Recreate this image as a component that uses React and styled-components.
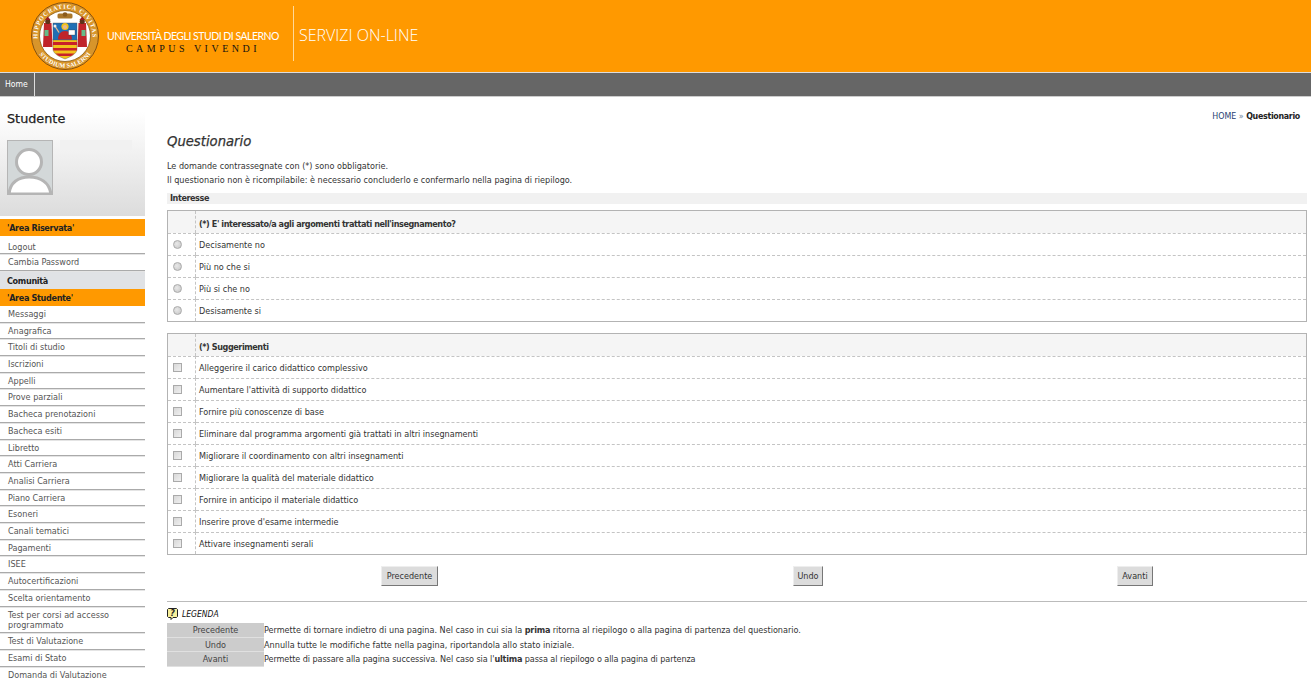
import React from "react";
import styled, { createGlobalStyle } from "styled-components";

const Global = createGlobalStyle`
  html, body { margin: 0; padding: 0; height: 680px; overflow: hidden; background: #fff; }
  body { font-family: "DejaVu Sans Condensed", "DejaVu Sans", sans-serif; font-size: 9px; color: #333; }
`;
const Page = styled.div`width: 1311px; height: 680px; overflow: hidden;`;
const Header = styled.header`
  height: 72px; background: #ff9900; display: flex; align-items: flex-start; padding-left: 30px; box-sizing: border-box;
`;
const SealBox = styled.div`width: 70px; height: 70px; margin-top: 1px; flex: none;`;
const Uni = styled.div`
  margin: 30px 0 0 6px; width: 174px; display: flex; flex-direction: column; align-items: center;
`;
const UniName = styled.div`
  font-family: "Lato", sans-serif; font-weight: 400; font-size: 10.5px; line-height: 12px; color: #fff; white-space: nowrap; letter-spacing: -0.5px;
`;
const Motto = styled.div`
  font-family: "Liberation Serif", serif; font-size: 10px; line-height: 12px; color: #111; letter-spacing: 3.5px; white-space: nowrap; margin-top: 1px;
`;
const Divider = styled.div`width: 1px; height: 55px; margin: 6px 5px 0 13px; background: #ffd999;`;
const Service = styled.div`
  font-family: "Open Sans", sans-serif; font-weight: 300; font-size: 16px; line-height: 20px; margin-top: 25px; color: #fff; white-space: nowrap;
`;
const Nav = styled.nav`
  height: 25px; box-sizing: border-box; background: #666; border-top: 1px solid #ddd; border-bottom: 1px solid #ccc; display: flex;
`;
const NavItem = styled.a`
  width: 35px; box-sizing: border-box; border-right: 1px solid #ddd; color: #fff; font-size: 8.6px; line-height: 23px; padding-left: 5px;
`;
const Main = styled.div`display: grid; grid-template-columns: 145px 1fr; `;
const Side = styled.aside`display: flex; flex-direction: column;`;
const Profile = styled.div`
  height: 119px; box-sizing: border-box; padding: 14px 0 0 7px; background: linear-gradient(#fff 0%, #fff 12%, #dcdcdc 100%); margin-bottom: 3px;
`;
const ProfileTitle = styled.div`
  font-family: "DejaVu Sans", sans-serif; font-size: 12.8px; line-height: 16px; color: #222; -webkit-text-stroke: 0.25px #222;
`;
const ProfileBody = styled.div`display: flex; gap: 7px; margin-top: 13px;`;
const Avatar = styled.div`
  width: 46px; height: 55px; box-sizing: border-box; border: 1px solid #b5b5b5; background: #d3d8d9; overflow: hidden;
`;
const Blank = styled.div`width: 72px; height: 10px; background: #f1f1f1;`;
const Group = styled.div`
  height: ${p => p.$h || 17}px; box-sizing: border-box; background: ${p => p.$bg}; padding: 1px 0 0 7px; font-weight: 700; letter-spacing: -0.33px;
  font-size: 9px; line-height: 16px; width: 145px; margin-top: ${p => p.$mt || 0}px; color: #222;
`;
const MenuItem = styled.div`
  box-sizing: border-box; padding: ${p => (p.$first ? "5.7px 0 1.5px 8px" : "3px 0 2.5px 8px")}; line-height: 10.2px; font-size: 9px; color: #555;
  width: 145px; border-bottom: ${p => (p.$last ? 0 : "1px solid #aaa")};
  box-shadow: ${p => (p.$last ? "none" : "0 1px 0 #e4e4e4")};
`;
const Content = styled.main`padding: 0 4px 0 22px; display: flex; flex-direction: column;`;
const Crumbs = styled.div`
  text-align: right; padding: 14px 7px 0 0; height: 26px; box-sizing: border-box; font-size: 8.8px; line-height: 11px; color: #6b7f99;
`;
const Crumb = styled.span`color: #1f3f72;`;
const CrumbNow = styled.b`color: #222; font-weight: 700; letter-spacing: -0.3px;`;
const Title = styled.h1`
  margin: 10px 0 0; font-family: "DejaVu Sans", sans-serif; font-size: 13.2px; line-height: 18px; font-style: italic; font-weight: 400; color: #333; -webkit-text-stroke: 0.25px #333;
`;
const Note = styled.p`margin: 0; font-size: 9px; line-height: 14px; color: #333;`;
const Notes = styled.div`margin-top: 8px;`;
const Section = styled.div`
  margin-top: 6px; height: 11px; background: #f1f1f1; padding-left: 3px; font-weight: 700; font-size: 9px; line-height: 11px; color: #333; letter-spacing: -0.42px;
`;
const Table = styled.div`
  margin-top: ${p => p.$mt}px; border: 1px solid #b3b3b3; display: grid; grid-template-columns: 28px 1fr;
`;
const Cell = styled.div`
  height: 22px; display: flex; align-items: center; box-sizing: border-box; padding-left: ${p => (p.$ctl ? 5 : 3)}px;
  padding-top: ${p => (p.$head ? 3 : 0)}px;
  background: ${p => (p.$head ? "#f5f5f5" : "#fff")};
  font-weight: ${p => (p.$head ? 700 : 400)};
  letter-spacing: ${p => (p.$head ? "-0.42px" : "0")};
  color: #333;
  border-top: ${p => (p.$first ? 0 : "1px dashed #c4c4c4")};
  border-right: ${p => (p.$ctl ? "1px dashed #c4c4c4" : 0)};
`;
const Radio = styled.input`
  appearance: none; margin: 0; width: 9px; height: 9px; border-radius: 50%; border: 1px solid #aaa; background: radial-gradient(circle at 40% 40%, #e8e8e8, #c5c5c5);
`;
const Check = styled.input`
  appearance: none; margin: 0; width: 9px; height: 9px; border: 1px solid #aaa; border-radius: 0; background: linear-gradient(135deg, #d8d8d8, #f0f0f0);
`;
const Buttons = styled.div`
  margin-top: 11px; display: grid; grid-template-columns: 484px 314px 1fr; justify-items: center;
`;
const Btn = styled.button`
  height: 20px; padding: 0; width: ${p => p.$w}px; background: #dcdcdc; color: #333; border: 1px solid; border-color: #eee #777 #777 #eee;
  font: inherit; font-size: 9px; margin-left: ${p => p.$shift || 0}px;
`;
const Rule = styled.hr`margin: 15px 0 0; border: 0; border-top: 1px solid #bbb; height: 0;`;
const LegendHead = styled.div`
  margin-top: 6px; display: flex; align-items: center; gap: 4px; font-style: italic; font-weight: 400; color: #111; height: 12px; font-size: 8.5px;
`;
const Legend = styled.div`margin-top: 3px; display: grid; grid-template-columns: 97px 1fr; `;
const LegendKey = styled.div`
  background: #ccc; text-align: center; height: 14.6px; line-height: 14px; color: #444; border-bottom: 1px solid #e0e0e0; box-sizing: border-box;
`;
const LegendText = styled.div`
  height: 14.6px; line-height: 14px; color: #333; white-space: nowrap; letter-spacing: ${p => p.$ls || 0}px;
`;
const LegendBold = styled.b`letter-spacing: -0.2px;`;

const Seal = () => (
  <svg viewBox="0 0 70 70" width="70" height="70">
    <defs>
      <path id="topArc" d="M7.9 39.8 A27.5 27.5 0 1 1 62.1 39.8" />
      <path id="botArc" d="M7.7 50.75 A31.5 31.5 0 0 0 62.3 50.75" />
    </defs>
    <circle cx="35" cy="35" r="33.5" fill="#d8952a" stroke="#7a4a10" strokeWidth="0.9" />
    <circle cx="35" cy="35" r="25.5" fill="#fff" stroke="#8a5a10" strokeWidth="0.8" />
    <text fontFamily="Liberation Serif, serif" fontSize="6.2" fontWeight="700" fill="#fff">
      <textPath href="#topArc" textLength="90" startOffset="2">HIPPOCRATICA CIVITAS</textPath>
    </text>
    <text fontFamily="Liberation Serif, serif" fontSize="6.2" fontWeight="700" fill="#fff">
      <textPath href="#botArc" textLength="60" startOffset="3">STUDIUM SALERNI</textPath>
    </text>
    <path d="M23 38H47V48C47 53 40 56 35 58C30 56 23 53 23 48Z" fill="#f2c21b" stroke="#555" strokeWidth="0.4" />
    <rect x="23" y="22" width="24" height="17" fill="#1f6fb5" stroke="#555" strokeWidth="0.4" />
    <path d="M23 41H47V44H23ZM23 47H47V49.5H23.4ZM25.5 52.5H44.5L41 55H29Z" fill="#c8202a" />
    <path d="M28 38.5C28 33 31 30 35 30C39 30 42 33 42 38.5Z" fill="#c0242a" />
    <circle cx="35" cy="25.5" r="3.6" fill="#f2c21b" />
    <circle cx="35" cy="26" r="2.1" fill="#e8b890" />
    <rect x="38.5" y="29" width="6.5" height="5" fill="#fff" stroke="#333" strokeWidth="0.3" />
    <path d="M29 31.5L25.5 26" stroke="#e8b890" strokeWidth="1.3" />
    <circle cx="25" cy="25" r="1.5" fill="#eee" />
    <path d="M14 22H21.5L22.5 46H13Z" fill="#c0242a" />
    <path d="M48.5 22H56L57 46H47.5Z" fill="#c0242a" />
    <rect x="14.5" y="29" width="4" height="6" fill="#6b8" />
    <rect x="51.5" y="29" width="4" height="6" fill="#6b8" />
    <circle cx="17.8" cy="20.5" r="2.6" fill="#5e3218" />
    <circle cx="52.2" cy="20.5" r="2.6" fill="#5e3218" />
    <path d="M15 19H20.6L17.8 15.5Z" fill="#9c1d22" />
    <path d="M49.4 19H55L52.2 15.5Z" fill="#9c1d22" />
    <rect x="27.5" y="12.5" width="15" height="5" rx="1.5" fill="#a9762a" />
    <circle cx="35" cy="13.5" r="2.3" fill="#8a5a1c" />
  </svg>
);

const AvatarIcon = () => (
  <svg viewBox="0 0 44 53" width="44" height="53">
    <circle cx="21" cy="21" r="12.5" fill="#fff" stroke="#b5b5b5" strokeWidth="3" />
    <path d="M1 53C2 41 11 36 21 36C32 36 41 41 43 53Z" fill="#fff" stroke="#b5b5b5" strokeWidth="3" />
  </svg>
);

const Help = () => (
  <svg viewBox="0 0 11 12" width="11" height="12">
    <path d="M1.5 .5H9.5L10.5 1.5V8.5L9.5 9.5H6L4 11.5V9.5H1.5L.5 8.5V1.5Z" fill="#f7ef9a" stroke="#222" strokeWidth="1" />
    <text x="5.5" y="8" textAnchor="middle" fontSize="8" fontWeight="700" fontFamily="DejaVu Sans, sans-serif" fill="#222">?</text>
  </svg>
);

const menuA = ["Messaggi","Anagrafica","Titoli di studio","Iscrizioni","Appelli","Prove parziali","Bacheca prenotazioni","Bacheca esiti","Libretto","Atti Carriera","Analisi Carriera","Piano Carriera","Esoneri","Canali tematici","Pagamenti","ISEE","Autocertificazioni","Scelta orientamento","Test per corsi ad accesso programmato","Test di Valutazione","Esami di Stato","Domanda di Valutazione"];
const opts = ["Decisamente no","Più no che si","Più si che no","Desisamente si"];
const sugg = ["Alleggerire il carico didattico complessivo","Aumentare l'attività di supporto didattico","Fornire più conoscenze di base","Eliminare dal programma argomenti già trattati in altri insegnamenti","Migliorare il coordinamento con altri insegnamenti","Migliorare la qualità del materiale didattico","Fornire in anticipo il materiale didattico","Inserire prove d'esame intermedie","Attivare insegnamenti serali"];

export default function App() {
  return (
    <Page>
      <Global />
      <Header>
        <SealBox><Seal /></SealBox>
        <Uni>
          <UniName>UNIVERSITÀ DEGLI STUDI DI SALERNO</UniName>
          <Motto>CAMPUS VIVENDI</Motto>
        </Uni>
        <Divider />
        <Service>SERVIZI ON-LINE</Service>
      </Header>
      <Nav><NavItem>Home</NavItem></Nav>
      <Main>
        <Side>
          <Profile>
            <ProfileTitle>Studente</ProfileTitle>
            <ProfileBody>
              <Avatar><AvatarIcon /></Avatar>
              <Blank />
            </ProfileBody>
          </Profile>
          <Group $bg="#ff9900">'Area Riservata'</Group>
          <MenuItem $first>Logout</MenuItem>
          <MenuItem>Cambia Password</MenuItem>
          <Group $bg="#e0e2e5" $mt={0.5}>Comunità</Group>
          <Group $bg="#ff9900" $h={17.3}>'Area Studente'</Group>
          {menuA.map((m, i) => <MenuItem key={m} $last={i === menuA.length - 1}>{m}</MenuItem>)}
        </Side>
        <Content>
          <Crumbs><Crumb>HOME</Crumb> » <CrumbNow>Questionario</CrumbNow></Crumbs>
          <Title>Questionario</Title>
          <Notes>
            <Note>Le domande contrassegnate con (*) sono obbligatorie.</Note>
            <Note>Il questionario non è ricompilabile: è necessario concluderlo e confermarlo nella pagina di riepilogo.</Note>
          </Notes>
          <Section>Interesse</Section>
          <Table $mt={6}>
            <Cell $ctl $head $first />
            <Cell $head $first>(*) E' interessato/a agli argomenti trattati nell'insegnamento?</Cell>
            {opts.map(o => (
              <React.Fragment key={o}>
                <Cell $ctl><Radio type="radio" name="q1" /></Cell>
                <Cell>{o}</Cell>
              </React.Fragment>
            ))}
          </Table>
          <Table $mt={11}>
            <Cell $ctl $head $first />
            <Cell $head $first>(*) Suggerimenti</Cell>
            {sugg.map(o => (
              <React.Fragment key={o}>
                <Cell $ctl><Check type="checkbox" /></Cell>
                <Cell>{o}</Cell>
              </React.Fragment>
            ))}
          </Table>
          <Buttons>
            <Btn $w={57} $shift={1}>Precedente</Btn>
            <Btn $w={30}>Undo</Btn>
            <Btn $w={36} $shift={-2}>Avanti</Btn>
          </Buttons>
          <Rule />
          <LegendHead><Help />LEGENDA</LegendHead>
          <Legend>
            <LegendKey>Precedente</LegendKey>
            <LegendText>Permette di tornare indietro di una pagina. Nel caso in cui sia la <LegendBold>prima</LegendBold> ritorna al riepilogo o alla pagina di partenza del questionario.</LegendText>
            <LegendKey>Undo</LegendKey>
            <LegendText $ls={0.04}>Annulla tutte le modifiche fatte nella pagina, riportandola allo stato iniziale.</LegendText>
            <LegendKey>Avanti</LegendKey>
            <LegendText $ls={-0.08}>Permette di passare alla pagina successiva. Nel caso sia l'<LegendBold>ultima</LegendBold> passa al riepilogo o alla pagina di partenza</LegendText>
          </Legend>
        </Content>
      </Main>
    </Page>
  );
}
